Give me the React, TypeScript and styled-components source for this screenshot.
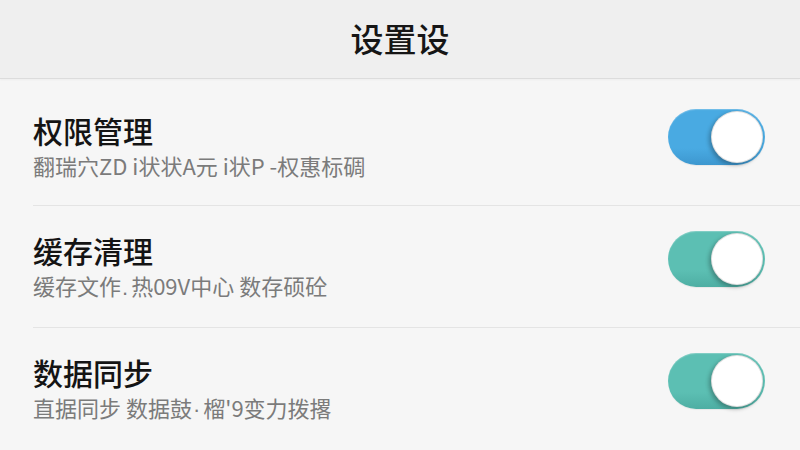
import React from "react";
import styled, { createGlobalStyle } from "styled-components";

const Global = createGlobalStyle`
  html, body {
    margin: 0;
    padding: 0;
    background: #f6f6f6;
  }
  body {
    font-family: "Noto Sans CJK SC", "Noto Sans", sans-serif;
    width: 800px;
    height: 450px;
    overflow: hidden;
  }
`;

const Page = styled.div`
  width: 800px;
  height: 450px;
  display: flex;
  flex-direction: column;
  background: #f6f6f6;
`;

const Header = styled.header`
  height: 78px;
  flex: none;
  display: flex;
  align-items: center;
  justify-content: center;
  background: #efefef;
  border-bottom: 1px solid #dcdcdc;
  box-shadow: 0 1px 2px rgba(0, 0, 0, 0.04);
`;

const Title = styled.h1`
  margin: 0 0 3px;
  font-size: 33px;
  font-weight: 500;
  color: #161616;
`;

const List = styled.div`
  display: flex;
  flex-direction: column;
  padding-top: 5px;
`;

const Row = styled.div<{ $last?: boolean }>`
  height: 121px;
  margin-left: 33px;
  padding-right: 35px;
  display: flex;
  align-items: center;
  justify-content: space-between;
  border-bottom: ${(p) => (p.$last ? "none" : "1px solid #e4e4e4")};
`;

const Texts = styled.div`
  display: flex;
  flex-direction: column;
  gap: 4px;
`;

const ItemTitle = styled.div`
  font-size: 30px;
  line-height: 36px;
  font-weight: 500;
  color: #141414;
`;

const ItemSub = styled.div`
  font-size: 22px;
  line-height: 26px;
  color: #7b7b7b;
`;

const Dot = styled.span`
  font-family: "Liberation Sans", sans-serif;
  margin: 0 3px 0 1px;
`;

const Track = styled.div<{ $color: string; $dark: string }>`
  width: 97px;
  height: 56px;
  border-radius: 28px;
  box-sizing: border-box;
  padding: 2px;
  display: flex;
  justify-content: flex-end;
  align-items: center;
  margin-bottom: 16px;
  background: linear-gradient(180deg, ${(p) => p.$color} 0%, ${(p) => p.$color} 70%, ${(p) => p.$dark} 100%);
  box-shadow: inset 0 1px 1px rgba(255, 255, 255, 0.25), 0 1px 1px rgba(0, 0, 0, 0.06);
`;

const Knob = styled.div`
  width: 52px;
  height: 52px;
  border-radius: 50%;
  background: #ffffff;
  box-sizing: border-box;
  border: 1px solid rgba(0, 0, 0, 0.12);
  box-shadow: -2px 2px 4px rgba(0, 0, 0, 0.28);
`;

const items = [
  {
    title: "权限管理",
    sub: <>翻瑞穴ZD i状状A元 i状P -权惠标碉</>,
    color: "#49aae2",
    dark: "#3d97cf",
  },
  {
    title: "缓存清理",
    sub: (
      <>
        缓存文作<Dot>.</Dot>热09V中心 数存硕砼
      </>
    ),
    color: "#5cbfb3",
    dark: "#4eaea3",
  },
  {
    title: "数据同步",
    sub: (
      <>
        直据同步 数据鼓<Dot>·</Dot>榴'9变力拨撂
      </>
    ),
    color: "#5cbfb3",
    dark: "#4eaea3",
  },
];

export default function App() {
  return (
    <Page>
      <Global />
      <Header>
        <Title>设置设</Title>
      </Header>
      <List>
        {items.map((it, i) => (
          <Row key={it.title} $last={i === items.length - 1}>
            <Texts>
              <ItemTitle>{it.title}</ItemTitle>
              <ItemSub>{it.sub}</ItemSub>
            </Texts>
            <Track $color={it.color} $dark={it.dark}>
              <Knob />
            </Track>
          </Row>
        ))}
      </List>
    </Page>
  );
}
